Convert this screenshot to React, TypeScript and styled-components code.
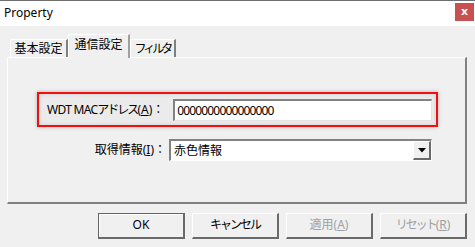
import React from "react";
import styled, { createGlobalStyle } from "styled-components";

const font = `"Noto Sans", "Noto Sans CJK JP", sans-serif`;

const GlobalStyle = createGlobalStyle`
  html, body {
    margin: 0;
    padding: 0;
    background: #f0f0f0;
  }
  body {
    width: 475px;
    height: 247px;
    overflow: hidden;
    font-family: ${font};
    font-size: 12px;
    color: #000;
  }
`;

const Window = styled.div`
  width: 475px;
  height: 247px;
  display: flex;
  flex-direction: column;
  background: #f0f0f0;
`;

const TitleBar = styled.div`
  height: 25px;
  display: flex;
  align-items: center;
  justify-content: space-between;
  background: #fff;
  border-top: 1px solid #707070;
  padding: 0 1px 0 4px;
`;

const TitleText = styled.span`
  font-size: 12px;
  line-height: 16px;
  margin-top: -2px;
`;

const CloseButton = styled.div`
  width: 19px;
  height: 18px;
  margin-top: -3px;
  background: #c75050;
  color: #fff;
  font-weight: 700;
  font-size: 11px;
  line-height: 16px;
  display: flex;
  align-items: center;
  justify-content: center;
  font-family: "DejaVu Sans", sans-serif;
`;

// Kana and latin in the dialog font are narrower than Noto; squeeze them.
const Narrow = styled.span<{ $ls: number }>`
  letter-spacing: ${(p) => p.$ls}px;
`;

const Colon = styled.span`
  margin-right: -3px;
`;

const Body = styled.div`
  padding: 8px 8px 0 7px;
  display: flex;
  flex-direction: column;
`;

const TabRow = styled.div`
  display: flex;
  align-items: flex-end;
  padding-left: 3px;
  height: 23px;
`;

const Tab = styled.div<{ $active?: boolean; $w: number }>`
  width: ${(p) => p.$w}px;
  height: ${(p) => (p.$active ? 24 : 18)}px;
  box-sizing: border-box;
  border-top: 1px solid #fff;
  border-left: 1px solid #fff;
  border-right: 2px solid ${(p) => (p.$active ? "#a0a0a0" : "#808080")};
  background: #f0f0f0;
  display: flex;
  align-items: ${(p) => (p.$active ? "flex-start" : "center")};
  justify-content: center;
  padding-top: ${(p) => (p.$active ? 3 : 1)}px;
  line-height: 14px;
  white-space: nowrap;
  position: relative;
  z-index: ${(p) => (p.$active ? 2 : 1)};
  margin-bottom: ${(p) => (p.$active ? -1 : 0)}px;
`;

const Panel = styled.div`
  height: 147px;
  box-sizing: border-box;
  border-top: 1px solid #fff;
  border-left: 1px solid #fff;
  border-right: 2px solid #808080;
  border-bottom: 2px solid #808080;
  padding: 34px 0 0 29px;
  display: flex;
  flex-direction: column;
  width: 460px;
`;

const Fields = styled.div`
  width: 401px;
  display: flex;
  flex-direction: column;
  gap: 12px;
`;

const Highlight = styled.div`
  height: 35px;
  box-sizing: border-box;
  border: 2px solid #f01010;
  background: #ebebeb;
  box-shadow: 0 0 4px rgba(0, 0, 0, 0.25), inset 0 0 4px rgba(0, 0, 0, 0.12);
  display: flex;
  align-items: center;
  justify-content: flex-end;
  padding: 1px 4px 0 8px;
`;

const Row = styled.div`
  height: 22px;
  display: flex;
  align-items: center;
  justify-content: flex-end;
  padding-right: 6px;
`;

const Label = styled.label<{ $gap: number }>`
  margin-right: ${(p) => p.$gap}px;
  line-height: 16px;
  white-space: nowrap;
  u {
    text-underline-offset: 1px;
  }
`;

const TextBox = styled.div`
  width: 261px;
  height: 22px;
  box-sizing: border-box;
  background: #fff;
  border-top: 2px solid #828282;
  border-left: 2px solid #828282;
  border-right: 1px solid #e3e3e3;
  border-bottom: 1px solid #e3e3e3;
  display: flex;
  align-items: center;
  padding-left: 2px;
  line-height: 14px;
  letter-spacing: -0.85px;
`;

const Combo = styled.div`
  width: 263px;
  height: 22px;
  box-sizing: border-box;
  background: #fff;
  border-top: 2px solid #828282;
  border-left: 2px solid #828282;
  border-right: 1px solid #fff;
  border-bottom: 1px solid #fff;
  display: flex;
  align-items: center;
  justify-content: space-between;
  padding-left: 3px;
  line-height: 14px;
`;

const DropButton = styled.div`
  width: 18px;
  height: 19px;
  box-sizing: border-box;
  background: #f0f0f0;
  border-top: 1px solid #fff;
  border-left: 1px solid #fff;
  border-right: 2px solid #6a6a6a;
  border-bottom: 2px solid #6a6a6a;
  display: flex;
  align-items: center;
  justify-content: center;
`;

const ButtonRow = styled.div`
  display: flex;
  justify-content: flex-end;
  gap: 7px;
  margin-top: 9px;
  width: 460px;
`;

const Button = styled.div<{ $default?: boolean; $disabled?: boolean }>`
  width: 87px;
  height: 26px;
  box-sizing: border-box;
  background: #f0f0f0;
  border-top: 1px solid ${(p) => (p.$default ? "#646464" : "#fff")};
  border-left: 1px solid ${(p) => (p.$default ? "#646464" : "#fff")};
  border-right: 2px solid #6a6a6a;
  border-bottom: 2px solid #6a6a6a;
  box-shadow: ${(p) => (p.$default ? "inset 1px 1px #fff" : "none")};
  color: ${(p) => (p.$disabled ? "#a0a0a0" : "#000")};
  display: flex;
  align-items: center;
  justify-content: center;
  line-height: 14px;
  padding-bottom: 1px;
  white-space: nowrap;
`;

const App: React.FC = () => {
  return (
    <>
      <GlobalStyle />
      <Window>
        <TitleBar>
          <TitleText>Property</TitleText>
          <CloseButton>x</CloseButton>
        </TitleBar>
        <Body>
          <TabRow>
            <Tab $w={58}>基本設定</Tab>
            <Tab $w={62} $active>
              通信設定
            </Tab>
            <Tab $w={46}>
              <Narrow $ls={-3}>フィルタ</Narrow>
            </Tab>
          </TabRow>
          <Panel>
            <Fields>
              <Highlight>
                <Label $gap={12}>
                  <Narrow $ls={-0.7}>WDT MAC</Narrow>
                  <Narrow $ls={-2}>アドレス</Narrow>(<u>A</u>)<Colon>：</Colon>
                </Label>
                <TextBox>0000000000000000</TextBox>
              </Highlight>
              <Row>
                <Label $gap={6}>
                  取得情報(<u>I</u>)<Colon>：</Colon>
                </Label>
                <Combo>
                  <span>赤色情報</span>
                  <DropButton>
                    <svg width="8" height="5" viewBox="0 0 8 5">
                      <path d="M0 0H8L4 4.5Z" fill="#000" />
                    </svg>
                  </DropButton>
                </Combo>
              </Row>
            </Fields>
          </Panel>
          <ButtonRow>
            <Button $default>OK</Button>
            <Button>
              <Narrow $ls={-2}>キャンセル</Narrow>
            </Button>
            <Button $disabled>
              適用(<u>A</u>)
            </Button>
            <Button $disabled>
              <Narrow $ls={-2}>リセット</Narrow>(<u>R</u>)
            </Button>
          </ButtonRow>
        </Body>
      </Window>
    </>
  );
};

export default App;
